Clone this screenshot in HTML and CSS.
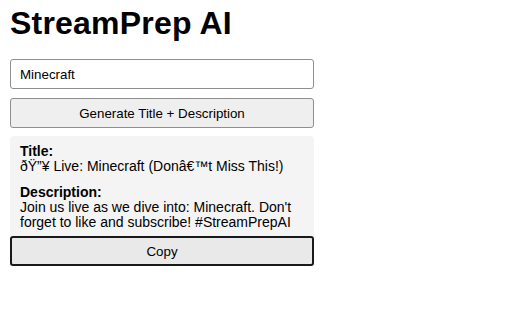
FILE: index.html
```html
<!DOCTYPE html>
<html>
<head>
<meta charset="utf-8">
<link rel="stylesheet" href="styles.css">
</head>
<body>
<div class="app">
  <h1 class="title">StreamPrep AI</h1>
  <input class="topic" type="text" value="Minecraft">
  <button class="btn generate">Generate Title + Description</button>
  <div class="output">
    <p class="block"><strong>Title:</strong><br>ðŸ”¥ Live: Minecraft (Donâ€™t Miss This!)</p>
    <p class="block"><strong>Description:</strong><br>Join us live as we dive into: Minecraft. Don't forget to like and subscribe! #StreamPrepAI</p>
  </div>
  <button class="btn copy">Copy</button>
</div>
</body>
</html>
```

FILE: styles.css
```css
html, body {
  margin: 0;
  padding: 0;
  background: #ffffff;
}
body {
  font-family: "Liberation Sans", Arial, sans-serif;
  color: #000;
}
.app {
  width: 304px;
  padding: 5px 10px;
  display: flex;
  flex-direction: column;
}
.title {
  margin: 0 0 17px 0;
  font-size: 32px;
  line-height: 37px;
  font-weight: bold;
  letter-spacing: 0.2px;
}
.topic {
  box-sizing: border-box;
  width: 100%;
  height: 30px;
  margin: 0;
  padding: 0 9px;
  border: 1px solid #8f8f8f;
  border-radius: 3px;
  font-family: "Liberation Sans", Arial, sans-serif;
  font-size: 13.33px;
  color: #000;
  background: #fff;
}
.btn {
  box-sizing: border-box;
  width: 100%;
  height: 30px;
  margin: 0;
  padding: 0;
  border: 1px solid #8f8f8f;
  border-radius: 3px;
  background: #efefef;
  font-family: "Liberation Sans", Arial, sans-serif;
  font-size: 13.33px;
  color: #000;
}
.generate {
  margin-top: 9px;
}
.output {
  margin-top: 8px;
  padding: 8px 10px 6px 10px;
  background: #f4f4f4;
  border-radius: 4px 4px 0 0;
  font-size: 14px;
  line-height: 15px;
}
.block {
  margin: 0 0 11px 0;
}
.block:last-child {
  margin-bottom: 0;
}
.copy {
  border: 2px solid #1a1a1a;
  background: #e9e9e9;
  height: 30px;
}
```
